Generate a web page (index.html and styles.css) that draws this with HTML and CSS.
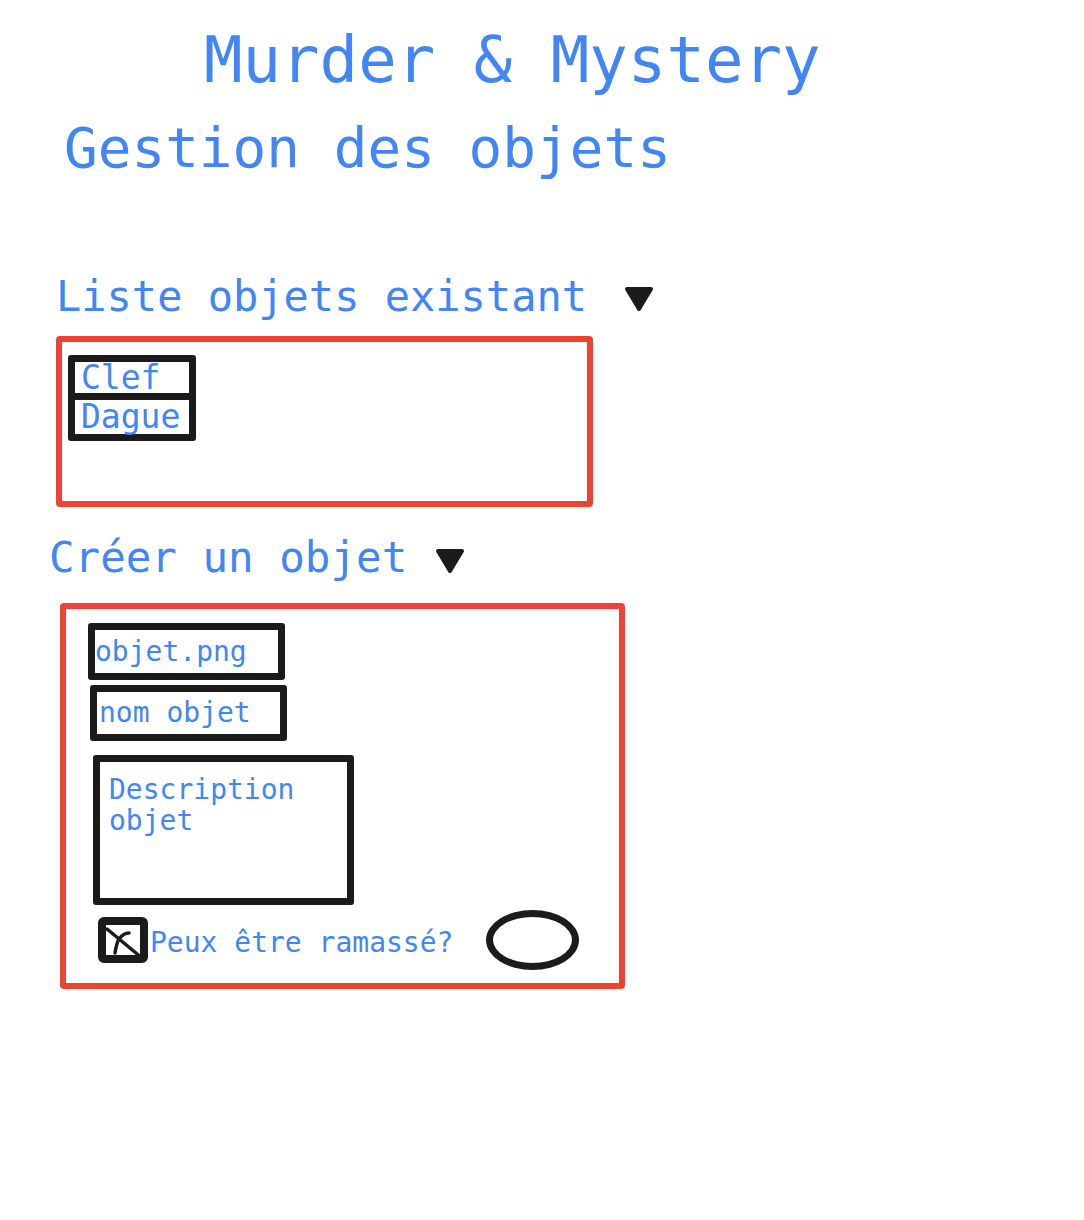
FILE: index.html
```html
<!DOCTYPE html>
<html lang="fr">
<head>
<meta charset="utf-8">
<title>Murder &amp; Mystery - Gestion des objets</title>
<link rel="stylesheet" href="styles.css">
</head>
<body>
<main class="page">
  <h1 class="title">Murder &amp; Mystery</h1>
  <h2 class="subtitle">Gestion des objets</h2>

  <section class="panel">
    <div class="section-head head-list">
      <h3 class="section-title">Liste objets existant</h3>
      <svg class="caret caret-list" width="30" height="26" viewBox="0 0 30 26"><path d="M3 3 L27 3 L15 23 Z" fill="#1b1b1b" stroke="#1b1b1b" stroke-width="4" stroke-linejoin="round"/></svg>
    </div>
    <div class="frame frame-list">
      <ul class="items">
        <li class="item item-first">Clef</li>
        <li class="item item-second">Dague</li>
      </ul>
    </div>
  </section>

  <section class="panel">
    <div class="section-head head-create">
      <h3 class="section-title title-create">Créer un objet</h3>
      <svg class="caret caret-create" width="30" height="26" viewBox="0 0 30 26"><path d="M3 3 L27 3 L15 23 Z" fill="#1b1b1b" stroke="#1b1b1b" stroke-width="4" stroke-linejoin="round"/></svg>
    </div>
    <div class="frame frame-create">
      <div class="field field-file">objet.png</div>
      <div class="field field-name">nom objet</div>
      <div class="field field-desc">Description<br>objet</div>
      <div class="row">
        <svg class="checkbox" width="50" height="46" viewBox="0 0 50 46">
          <rect x="4" y="4" width="42" height="38" rx="2" fill="#fff" stroke="#1b1b1b" stroke-width="8"/>
          <path d="M9 12 L44 41" stroke="#1b1b1b" stroke-width="3.5" stroke-linecap="round" fill="none"/>
          <path d="M17 36 C18 30 19 25 21 22 C24 18 27 16 31 16" stroke="#1b1b1b" stroke-width="3.5" stroke-linecap="round" fill="none"/>
        </svg>
        <span class="check-label">Peux être ramassé?</span>
        <div class="ellipse"></div>
      </div>
    </div>
  </section>
</main>
</body>
</html>
```
FILE: styles.css
```css
html, body {
  margin: 0;
  padding: 0;
  background: #ffffff;
}

body {
  font-family: "DejaVu Sans Mono", "Liberation Mono", monospace;
  color: #4285f4;
}

.page {
  padding-top: 28px;
  display: flex;
  flex-direction: column;
  align-items: flex-start;
}

.title {
  margin: 0;
  padding-left: 204px;
  font-size: 64px;
  line-height: 64px;
  font-weight: normal;
}

.subtitle {
  margin: 27px 0 0 0;
  padding-left: 64px;
  font-size: 56px;
  line-height: 57px;
  font-weight: normal;
}

.panel {
  display: flex;
  flex-direction: column;
  align-items: flex-start;
}

.section-head {
  display: flex;
  align-items: flex-start;
}

.head-list {
  margin-top: 100px;
  padding-left: 56px;
}

.head-create {
  margin-top: 29px;
  padding-left: 49px;
}

.section-title {
  margin: 0;
  font-size: 42px;
  line-height: 42px;
  font-weight: normal;
}

.title-create {
  font-size: 42.5px;
  line-height: 43px;
}

.caret {
  display: block;
  flex: none;
}

.caret-list {
  margin-top: 10px;
  margin-left: 37px;
}

.caret-create {
  margin-top: 12px;
  margin-left: 28px;
}

.frame {
  box-sizing: border-box;
  border: 6px solid #ee4237;
  border-radius: 4px;
}

.frame-list {
  margin-top: 18px;
  margin-left: 56px;
  width: 537px;
  height: 171px;
  padding: 13px 0 0 6px;
}

.items {
  list-style: none;
  margin: 0;
  padding: 0;
  width: 128px;
  box-sizing: border-box;
  border: 7px solid #1b1b1b;
  border-radius: 3px;
}

.item {
  font-size: 33px;
  padding-left: 6px;
}

.item-first {
  line-height: 31px;
  height: 31px;
}

.item-second {
  line-height: 34px;
  height: 34px;
  border-top: 7px solid #1b1b1b;
}

.frame-create {
  margin-top: 24px;
  margin-left: 60px;
  width: 565px;
  height: 386px;
  padding-top: 14px;
  display: flex;
  flex-direction: column;
  align-items: flex-start;
}

.field {
  box-sizing: border-box;
  border: 7px solid #1b1b1b;
  border-radius: 3px;
  font-size: 28px;
}

.field-file {
  margin-left: 22px;
  width: 197px;
  height: 57px;
  line-height: 43px;
  padding-left: 0;
}

.field-name {
  margin-top: 5px;
  margin-left: 24px;
  width: 197px;
  height: 56px;
  line-height: 42px;
  padding-left: 2px;
}

.field-desc {
  margin-top: 14px;
  margin-left: 27px;
  width: 261px;
  height: 150px;
  line-height: 31px;
  padding: 12px 0 0 9px;
}

.row {
  margin-top: 5px;
  margin-left: 32px;
  height: 60px;
  display: flex;
  align-items: center;
  flex: none;
}

.checkbox {
  display: block;
  flex: none;
}

.check-label {
  margin-left: 2px;
  margin-top: 6px;
  font-size: 28px;
  line-height: 34px;
  flex: none;
}

.ellipse {
  box-sizing: border-box;
  flex: none;
  margin-left: 33px;
  width: 93px;
  height: 60px;
  border: 7px solid #1b1b1b;
  border-radius: 50%;
}
```
